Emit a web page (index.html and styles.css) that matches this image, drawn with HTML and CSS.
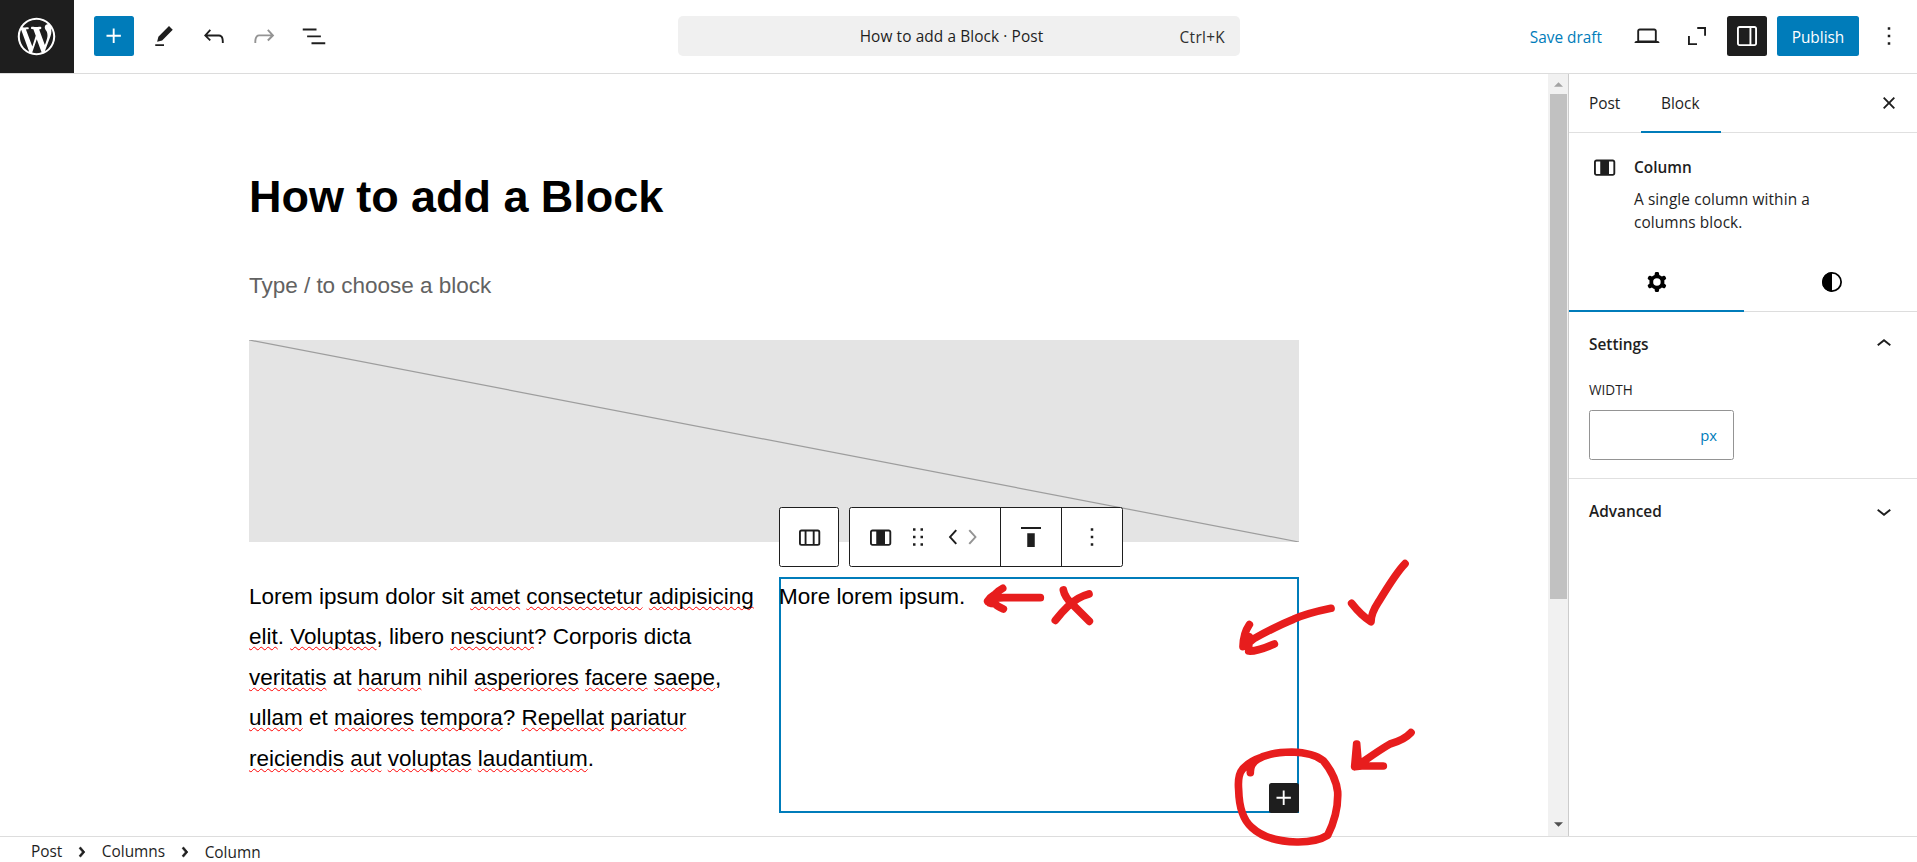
FILE: index.html
```html
<!DOCTYPE html>
<html lang="en">
<head>
<meta charset="utf-8">
<title>How to add a Block · Post</title>
<link rel="stylesheet" href="styles.css">
</head>
<body>
<div class="editor">
  <header class="topbar">
    <a class="site-logo"><svg viewBox="-2 -2 24 24"><path d="M20 10c0-5.51-4.49-10-10-10C4.48 0 0 4.49 0 10c0 5.52 4.48 10 10 10 5.51 0 10-4.48 10-10zM7.78 15.37L4.37 6.22c.55-.02 1.17-.08 1.17-.08.5-.06.44-1.13-.06-1.11 0 0-1.45.11-2.37.11-.18 0-.37 0-.58-.01C4.12 2.69 6.87 1.11 10 1.11c2.33 0 4.45.87 6.05 2.34-.68-.11-1.65.39-1.65 1.58 0 .74.45 1.36.9 2.1.35.61.55 1.36.55 2.46 0 1.49-1.4 5-1.4 5l-3.03-8.37c.54-.02.82-.17.82-.17.5-.05.44-1.25-.06-1.22 0 0-1.44.12-2.38.12-.87 0-2.33-.12-2.33-.12-.5-.03-.56 1.2-.06 1.22l.92.08 1.26 3.41zM17.41 10c.24-.64.74-1.87.43-4.25.7 1.29 1.05 2.71 1.05 4.25 0 3.29-1.73 6.24-4.4 7.78.97-2.59 1.94-5.2 2.92-7.78zM6.1 18.09C3.12 16.65 1.11 13.53 1.11 10c0-1.3.23-2.48.72-3.59C3.25 10.3 4.67 14.2 6.1 18.09zm4.03-6.63l2.58 6.98c-.86.29-1.76.45-2.71.45-.79 0-1.57-.11-2.29-.33.81-2.38 1.62-4.74 2.42-7.1z"/></svg></a>
    <div class="tools">
      <span class="btn primary"><svg class="icon" viewBox="0 0 24 24"><path d="M11 12.5V17.5H12.5V12.5H17.5V11H12.5V6H11V11H6V12.5H11Z"/></svg></span>
      <span class="btn"><svg class="icon" viewBox="0 0 24 24"><path d="m19 7-3-3-8.5 8.5-1 4 4-1L19 7Zm-7 11.5H5V20h7v-1.5Z"/></svg></span>
      <span class="btn"><svg class="icon" viewBox="0 0 24 24"><path d="M18.3 11.7c-.6-.6-1.4-.9-2.3-.9H6.7l2.9-3.3-1.1-1-4.5 5L8.5 16l1-1-2.7-2.7H16c.5 0 .9.2 1.3.5 1 1 1 3.4 1 4.5v.3h1.5v-.2c0-1.5 0-4.3-1.5-5.7z"/></svg></span>
      <span class="btn disabled"><svg class="icon" viewBox="0 0 24 24"><path d="M15.6 6.5l-1.1 1 2.9 3.3H8c-.9 0-1.7.3-2.3.9-1.4 1.5-1.4 4.2-1.4 5.6v.2h1.5v-.3c0-1.1 0-3.5 1-4.5.3-.3.7-.5 1.3-.5h9.2L14.5 15l1.1 1.1 4.6-4.6-4.6-5z"/></svg></span>
      <span class="btn"><svg class="icon" viewBox="0 0 24 24"><path d="M3 6h11v1.5H3V6Zm3.5 5.5h11V13h-11v-1.5ZM21 17H10v1.5h11V17Z"/></svg></span>
    </div>
    <div class="command"><span class="command-title">How to add a Block · Post</span><span class="command-key">Ctrl+K</span></div>
    <div class="actions">
      <span class="save">Save draft</span>
      <span class="btn"><svg class="icon" viewBox="0 0 24 24"><path d="M20.5 16h-.7V8c0-1.1-.9-2-2-2H6.2c-1.1 0-2 .9-2 2v8h-.7c-.8 0-1.5.7-1.5 1.5h20c0-.8-.7-1.5-1.5-1.5zM5.7 8c0-.3.2-.5.5-.5h11.6c.3 0 .5.2.5.5v7.6H5.7V8z"/></svg></span>
      <span class="btn"><svg class="icon" viewBox="0 0 24 24"><path d="M12.2 4.8h7v6.9h-1.5V6.3h-5.5zM4.8 12h1.5v5.7h5.7v1.5H4.8z"/></svg></span>
      <span class="btn pressed"><svg class="icon" viewBox="0 0 24 24"><path d="M18 4H6c-1.1 0-2 .9-2 2v12c0 1.1.9 2 2 2h12c1.1 0 2-.9 2-2V6c0-1.1-.9-2-2-2zm-4 14.5H6c-.3 0-.5-.2-.5-.5V6c0-.3.2-.5.5-.5h8v13zm4.5-.5c0 .3-.2.5-.5.5h-2.5v-13H18c.3 0 .5.2.5.5v12z"/></svg></span>
      <span class="publish">Publish</span>
      <span class="btn"><svg class="icon" viewBox="0 0 24 24"><path d="M13 19h-2v-2h2v2zm0-6h-2v-2h2v2zm0-6h-2V5h2v2z"/></svg></span>
    </div>
  </header>

  <div class="body">
    <main class="canvas">
      <h1 class="title">How to add a Block</h1>
      <p class="placeholder">Type / to choose a block</p>
      <div class="spacer"><svg viewBox="0 0 1050 202" preserveAspectRatio="none"><path d="M0 0L1050 202"/></svg></div>
      <div class="columns">
        <p class="column text">Lorem ipsum dolor sit <u>amet</u> <u>consectetur</u> <u>adipisicing</u><br><u>elit</u>. <u>Voluptas</u>, libero <u>nesciunt</u>? Corporis dicta<br><u>veritatis</u> at <u>harum</u> nihil <u>asperiores</u> <u>facere</u> <u>saepe</u>,<br><u>ullam</u> et <u>maiores</u> <u>tempora</u>? <u>Repellat</u> <u>pariatur</u><br><u>reiciendis</u> <u>aut</u> <u>voluptas</u> <u>laudantium</u>.</p>
        <div class="column selected">
          <p class="text">More lorem ipsum.</p>
          <span class="appender"><svg class="icon" viewBox="0 0 24 24"><path d="M11 12.5V17.5H12.5V12.5H17.5V11H12.5V6H11V11H6V12.5H11Z"/></svg></span>
          <div class="block-toolbar">
            <div class="group parent"><svg class="icon" viewBox="0 0 24 24"><path fill-rule="evenodd" d="M15 7.5h-5v10h5v-10Zm1.5 0v10H19a.5.5 0 0 0 .5-.5V8a.5.5 0 0 0-.5-.5h-2.5ZM6 7.5h2.5v10H6a.5.5 0 0 1-.5-.5V8a.5.5 0 0 1 .5-.5ZM6 6h13a2 2 0 0 1 2 2v9a2 2 0 0 1-2 2H6a2 2 0 0 1-2-2V8a2 2 0 0 1 2-2Z"/></svg></div>
            <div class="group">
              <div class="segment mover">
                <svg class="icon" viewBox="0 0 24 24"><path d="M19 6H6c-1.1 0-2 .9-2 2v9c0 1.1.9 2 2 2h13c1.1 0 2-.9 2-2V8c0-1.1-.9-2-2-2zM6 17.5c-.3 0-.5-.2-.5-.5V8c0-.3.2-.5.5-.5h3v10H6zm13.5-.5c0 .3-.2.5-.5.5h-3v-10h3c.3 0 .5.2.5.5v9z"/></svg>
                <svg class="icon drag" viewBox="0 0 24 24"><path d="M8 7h2V5H8v2zm0 6h2v-2H8v2zm0 6h2v-2H8v2zm6-14v2h2V5h-2zm0 8h2v-2h-2v2zm0 6h2v-2h-2v2z"/></svg>
                <svg class="icon half" viewBox="5 0 14 24"><path d="M14.6 7l-1.2-1L8 12l5.4 6 1.2-1-4.6-5z"/></svg>
                <svg class="icon half disabled" viewBox="5 0 14 24"><path d="M10.6 6L9.4 7l4.6 5-4.6 5 1.2 1 5.4-6z"/></svg>
              </div>
              <div class="segment"><svg class="icon" viewBox="0 0 24 24"><path d="M9 20h6V9H9v11zM4 4v1.5h16V4H4z"/></svg></div>
              <div class="segment"><svg class="icon" viewBox="0 0 24 24"><path d="M13 19h-2v-2h2v2zm0-6h-2v-2h2v2zm0-6h-2V5h2v2z"/></svg></div>
            </div>
          </div>
        </div>
      </div>
    </main>
    <div class="scrollbar">
      <svg class="arrow" viewBox="0 0 10 5"><path fill="#a3a3a3" d="M0 5L5 0l5 5z"/></svg>
      <div class="thumb"></div>
      <svg class="arrow down" viewBox="0 0 10 5"><path fill="#505050" d="M0 0l5 5 5-5z"/></svg>
    </div>
    <aside class="sidebar">
      <nav class="tabs">
        <span class="tab">Post</span><span class="tab active">Block</span>
        <svg class="icon close" viewBox="0 0 24 24"><path d="M12 13.06l3.712 3.713 1.061-1.06L13.061 12l3.712-3.712-1.06-1.06L12 10.938 8.288 7.227l-1.061 1.06L10.939 12l-3.712 3.712 1.06 1.061L12 13.061z"/></svg>
      </nav>
      <section class="card">
        <svg class="icon" viewBox="0 0 24 24"><path d="M19 6H6c-1.1 0-2 .9-2 2v9c0 1.1.9 2 2 2h13c1.1 0 2-.9 2-2V8c0-1.1-.9-2-2-2zM6 17.5c-.3 0-.5-.2-.5-.5V8c0-.3.2-.5.5-.5h3v10H6zm13.5-.5c0 .3-.2.5-.5.5h-3v-10h3c.3 0 .5.2.5.5v9z"/></svg>
        <div><h2 class="card-title">Column</h2><p class="card-text">A single column within a<br>columns block.</p></div>
      </section>
      <div class="subtabs">
        <span class="subtab active"><svg class="icon" viewBox="0 0 24 24"><path fill-rule="evenodd" d="M10.289 4.836A1 1 0 0111.275 4h1.306a1 1 0 01.987.836l.244 1.466c.787.26 1.503.679 2.108 1.218l1.393-.522a1 1 0 011.216.437l.653 1.13a1 1 0 01-.23 1.273l-1.148.944a6.025 6.025 0 010 2.435l1.149.946a1 1 0 01.23 1.272l-.653 1.13a1 1 0 01-1.216.437l-1.394-.522c-.605.54-1.32.958-2.108 1.218l-.244 1.466a1 1 0 01-.987.836h-1.306a1 1 0 01-.986-.836l-.244-1.466a5.995 5.995 0 01-2.108-1.218l-1.394.522a1 1 0 01-1.217-.436l-.653-1.131a1 1 0 01.23-1.272l1.149-.946a6.026 6.026 0 010-2.435l-1.148-.944a1 1 0 01-.23-1.272l.653-1.131a1 1 0 011.217-.437l1.393.522a5.994 5.994 0 012.108-1.218l.244-1.466zM14.929 12a3 3 0 11-6 0 3 3 0 016 0z"/></svg></span>
        <span class="subtab"><svg class="icon" viewBox="0 0 24 24"><circle cx="12" cy="12" r="7.3" fill="none" stroke="#000" stroke-width="1.4"/><path d="M12 4a8 8 0 0 0 0 16z"/></svg></span>
      </div>
      <section class="panel settings">
        <div class="panel-head"><span>Settings</span><svg class="icon" viewBox="0 0 24 24"><path d="M6.5 12.4L12 8l5.5 4.4-.9 1.2L12 10l-4.5 3.6-1-1.2z"/></svg></div>
        <div class="label">WIDTH</div>
        <div class="field">px</div>
      </section>
      <section class="panel">
        <div class="panel-head"><span>Advanced</span><svg class="icon raised" viewBox="0 0 24 24"><path d="M17.5 11.6L12 16l-5.5-4.4.9-1.2L12 14l4.5-3.6 1 1.2z"/></svg></div>
      </section>
    </aside>
  </div>

  <footer class="breadcrumb">
    <span>Post</span>
    <svg class="icon sep" viewBox="0 0 24 24"><path d="M10.86 8.04l3.42 3.99-3.42 3.99-1.14-.98 2.58-3.01-2.58-3.01z"/></svg>
    <span>Columns</span>
    <svg class="icon sep" viewBox="0 0 24 24"><path d="M10.86 8.04l3.42 3.99-3.42 3.99-1.14-.98 2.58-3.01-2.58-3.01z"/></svg>
    <span class="current">Column</span>
  </footer>

  <svg class="annotations" viewBox="0 0 1440 966">
    <path d="M241 173H135Q105 172 83 184M128 145Q118 150 106 162Q90 172 83 183Q85 191 105 191Q112 199 130 207"/>
    <path d="M310 150Q314 172 340 196L388 244M387 162Q350 172 324 199Q304 218 286 241"/>
    <path d="M1113 205Q1040 220 1000 238Q950 258 880 297L862 312M868 254Q850 280 849 320L868 290L866 320M943 312Q890 335 866 333"/>
    <path d="M1175 190Q1203 226 1233 245Q1233 220 1256 185Q1310 96 1335 71"/>
    <path d="M871 698Q870 672 893 658Q930 636 995 636Q1060 638 1090 662Q1127 706 1133 755Q1136 820 1103 886Q1070 907 1010 906Q920 904 875 862Q838 830 836 750Q832 705 848 687Q870 664 900 654"/>
    <path d="M1353 578Q1333 600 1290 612Q1262 628 1205 668L1184 680L1190 612M1184 680L1205 678H1270M1190 612L1194 660"/>
  </svg>
</div>
</body>
</html>
```

FILE: styles.css
```css
* { box-sizing: border-box; }
body {
  margin: 0;
  background: #fff;
  color: #1e1e1e;
  font: 15.4px/22.75px "Open Sans", "Noto Sans", sans-serif;
}
h1, h2, p { margin: 0; font-weight: inherit; }
.editor {
  position: relative;
  display: flex;
  flex-direction: column;
  width: 1917px;
  height: 862px;
  overflow: hidden;
}
.icon { width: 30px; height: 30px; flex: none; display: block; fill: currentColor; }

/* Top bar */
.topbar {
  display: flex;
  flex: none;
  height: 74px;
  padding-right: 8px;
  border-bottom: 1px solid #dcdcdc;
}
.site-logo {
  width: 74px;
  height: 73px;
  display: flex;
  align-items: center;
  justify-content: center;
  background: #1e1e1e;
  color: #fff;
}
.site-logo svg { width: 45px; height: 45px; fill: currentColor; margin: 0 1px 1px 0; }
.tools, .actions { display: flex; gap: 10px; padding-top: 16px; }
.tools { padding-left: 20px; width: 604px; }
.actions { margin-left: auto; }
.btn {
  width: 40px;
  height: 40px;
  display: flex;
  align-items: center;
  justify-content: center;
  border-radius: 2.5px;
}
.primary { background: #007cba; color: #fff; }
.pressed { background: #1e1e1e; color: #fff; }
.disabled { color: #949494; }
.command {
  display: grid;
  grid-template-columns: 1fr auto 1fr;
  align-items: center;
  width: 562px;
  height: 40px;
  margin-top: 16px;
  padding: 0 15px;
  border-radius: 5px;
  background: #f0f0f0;
}
.command-title { grid-column: 2; padding-top: 2px; margin-right: 15px; letter-spacing: .1px; }
.command-key { justify-self: end; padding-top: 4px; color: #2f2f2f; letter-spacing: .3px; }
.save { line-height: 44px; color: #007cba; margin-right: 15px; }
.publish {
  width: 82px;
  height: 40px;
  line-height: 44px;
  text-align: center;
  border-radius: 2.5px;
  background: #007cba;
  color: #fff;
}

/* Canvas */
.body { display: flex; flex: 1; min-height: 0; }
.canvas {
  width: 1548px;
  padding: 95px 249px 0;
  color: #000;
  font-family: "Liberation Sans", Arial, sans-serif;
  font-size: 22.5px;
  line-height: 40.5px;
}
.title { font-size: 45px; line-height: 56px; font-weight: 700; letter-spacing: -.05px; }
.placeholder { margin: 41px 0 33px; color: #626262; letter-spacing: -.02px; }
.spacer { height: 202px; background: #e4e4e4; }
.spacer svg { display: block; width: 100%; height: 100%; }
.spacer path { stroke: #9d9d9d; stroke-width: 1.2; }
.columns { display: grid; grid-template-columns: 520px 520px; gap: 10px; margin-top: 35px; }
.column.selected {
  position: relative;
  height: 236px;
  box-shadow: inset 0 0 0 2px #007cba;
}
.text { white-space: nowrap; letter-spacing: -.01px; }
.text u {
  text-decoration: underline wavy #f00 1.3px;
  text-underline-offset: 2px;
  text-decoration-skip-ink: none;
}
.appender {
  position: absolute;
  right: 0;
  bottom: 0;
  background: #1e1e1e;
  color: #fff;
  border-radius: 2.5px;
}
.block-toolbar {
  position: absolute;
  left: 0;
  top: -70px;
  display: flex;
  gap: 10px;
  color: #1e1e1e;
}
.group {
  display: flex;
  height: 60px;
  background: #fff;
  border: 1px solid #1e1e1e;
  border-radius: 2.5px;
}
.parent { width: 60px; align-items: center; justify-content: center; }
.segment { display: flex; align-items: center; justify-content: center; width: 60px; }
.segment + .segment { border-left: 1px solid #1e1e1e; width: 61px; }
.mover { width: 150px; justify-content: flex-start; padding-left: 15px; }
.drag { margin: 0 12px 0 8px; }
.half { width: 17.5px; }

/* Scrollbar */
.scrollbar {
  width: 20px;
  display: flex;
  flex-direction: column;
  padding: 8px 1px 9px 2px;
  background: #f1f1f1;
  align-items: center;
}
.arrow { width: 9px; height: 5px; flex: none; display: block; }
.thumb { width: 17px; height: 505px; margin-top: 7px; background: #c1c1c1; }
.down { margin-top: auto; }

/* Sidebar */
.sidebar { width: 349px; border-left: 1px solid #ccc; }
.tabs { display: flex; height: 59px; border-bottom: 1px solid #e0e0e0; font-weight: 500; }
.tab { height: 59px; padding: 0 20px; line-height: 60px; }
.tab:first-child { width: 72px; }
.tab.active { width: 80px; border-bottom: 2px solid #007cba; }
.close { margin: 14px 13px 0 auto; }
.card { display: flex; gap: 15px; padding: 19px 20px 0; height: 119px; }
.card-title { font-size: 15.4px; line-height: 32px; font-weight: 600; }
.card-text { padding-top: 5px; letter-spacing: .1px; }
.subtabs { display: grid; grid-template-columns: 175px 175px; height: 60px; color: #000; }
.subtab { display: flex; align-items: center; justify-content: center; padding-top: 1px; border-bottom: 1px solid #ddd; }
.subtab.active { padding-top: 2px; border-bottom: 2px solid #007cba; }
.panel { padding: 4px 18px 0 20px; }
.settings { height: 167px; border-bottom: 1px solid #e0e0e0; }
.panel-head { display: flex; justify-content: space-between; align-items: center; height: 58px; font-weight: 600; }
.settings .icon, .raised { margin-bottom: 3px; }
.label { margin-top: 5px; font-size: 13.6px; font-weight: 500; }
.field {
  width: 145px;
  height: 50px;
  margin-top: 8px;
  padding-right: 16px;
  line-height: 48px;
  text-align: right;
  color: #007cba;
  font-size: 14.8px;
  border: 1px solid #949494;
  border-radius: 2.5px;
}

/* Breadcrumb */
.breadcrumb {
  flex: none;
  display: flex;
  height: 26px;
  padding: 6px 0 0 31px;
  border-top: 1px solid #ddd;
  line-height: 18px;
}
.breadcrumb span { height: 18px; }
.sep { margin: -6px 5px 0 4.5px; stroke: currentColor; stroke-width: .6; }
.breadcrumb .current { margin-top: 1px; }

/* Hand-drawn marks over the canvas */
.annotations {
  position: absolute;
  left: 960px;
  top: 540px;
  width: 480px;
  height: 322px;
  fill: none;
  stroke: #e71d1d;
  stroke-width: 23;
  stroke-linecap: round;
  stroke-linejoin: round;
}
```
